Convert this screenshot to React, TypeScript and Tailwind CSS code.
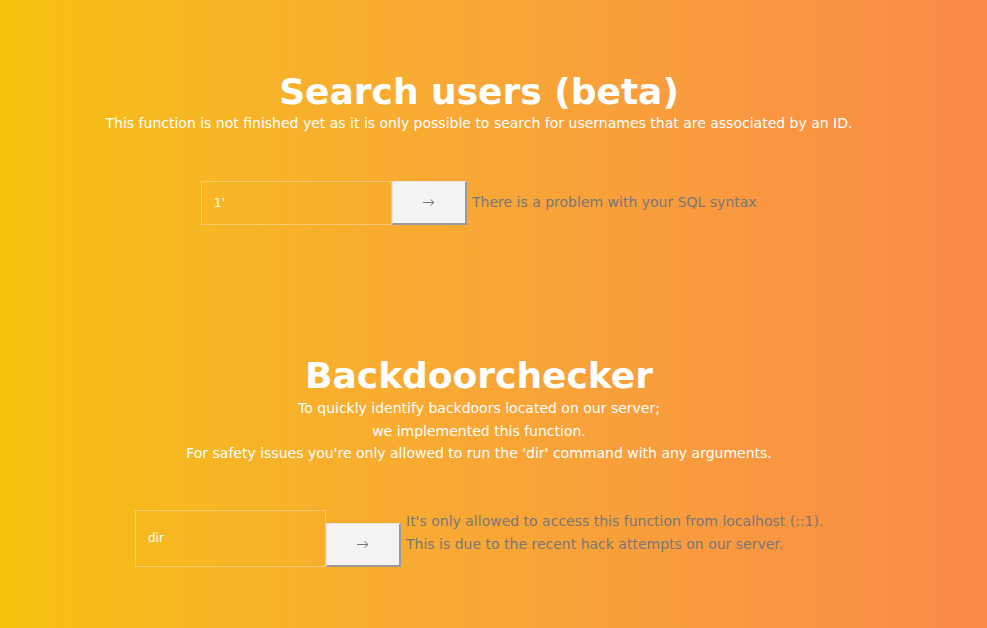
export default function App() {
  return (
    <div
      className="h-[628px] w-full overflow-hidden bg-gradient-to-r from-[#f5c10a] to-[#fa8a47] text-white"
      style={{ fontFamily: '"DejaVu Sans", sans-serif' }}
    >
      <div className="w-[958px] text-center">
        {/* Search users */}
        <section className="pt-[71px]">
          <h1 className="text-[36px] font-bold leading-[42px]">Search users (beta)</h1>
          <p className="mt-[1px] text-[14px] leading-[18px]">
            This function is not finished yet as it is only possible to search for usernames that are associated by an ID.
          </p>
          <div className="mt-[49px] flex items-start pl-[201px]">
            <div className="flex h-[44px] w-[191px] items-center border border-white/30 px-3 text-left text-[12px]">
              1'
            </div>
            <ArrowButton />
            <div className="ml-[5px] pt-[12px] text-[14px] leading-[18px] text-[#787878]">
              There is a problem with your SQL syntax
            </div>
          </div>
        </section>

        {/* Backdoorchecker */}
        <section className="pt-[130px]">
          <h1 className="text-[36px] font-bold leading-[42px]">Backdoorchecker</h1>
          <div className="text-[14px] leading-[22.5px]">
            <p>To quickly identify backdoors located on our server;</p>
            <p>we implemented this function.</p>
            <p>For safety issues you're only allowed to run the 'dir' command with any arguments.</p>
          </div>
          <div className="mt-[45px] flex items-end pl-[135px]">
            <div className="flex h-[57px] w-[191px] items-center border border-white/30 px-3 text-left text-[12px]">
              dir
            </div>
            <ArrowButton />
            <div className="ml-[5px] self-start text-left text-[14px] leading-[23px] text-[#787878]">
              <p>It's only allowed to access this function from localhost (::1).</p>
              <p>This is due to the recent hack attempts on our server.</p>
            </div>
          </div>
        </section>
      </div>
    </div>
  );
}

function ArrowButton() {
  return (
    <button className="flex h-[44px] w-[75px] items-center justify-center border-t border-l border-t-[#e4e4e4] border-l-[#e4e4e4] border-r-2 border-b-2 border-r-[#9a9a9a] border-b-[#9a9a9a] bg-[#f5f4f3] text-[#777]">
      <svg width="12" height="9" viewBox="0 0 12 9" fill="none" stroke="currentColor" strokeWidth="1">
        <path d="M0 4.5h11M7.5 1.5l3.5 3L7.5 7.5" />
      </svg>
    </button>
  );
}
